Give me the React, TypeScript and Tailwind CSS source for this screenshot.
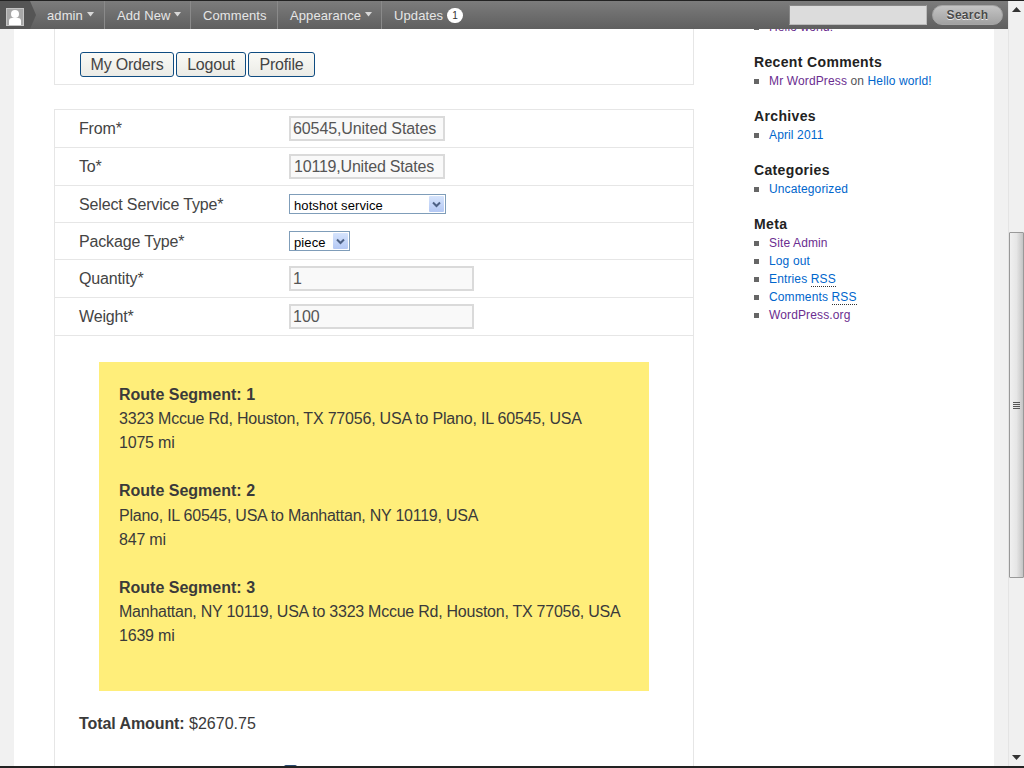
import React from "react";

const Caret = () => (
  <svg width="7" height="5" viewBox="0 0 7 5" className="ml-[4px] mb-[3px] inline-block">
    <path d="M0 0h7L3.5 4.5z" fill="#d8d8d8" />
  </svg>
);

function BarItem({ w, label, caret }: { w: string; label: string; caret?: boolean }) {
  return (
    <div className={`${w} flex h-full items-center pl-[12px] pt-[1px] border-r border-[#8a8a8a] text-[13px] tracking-[0.1px] text-[#e6e6e6]`}>
      <span>{label}</span>
      {caret && <Caret />}
    </div>
  );
}

function AdminBar() {
  return (
    <div className="relative z-10 flex h-[28px] shrink-0 items-stretch bg-gradient-to-b from-[#7c7c7c] to-[#5f5f5f]">
      <div className="flex w-[36px] items-center bg-[#555] [clip-path:polygon(0_0,30px_0,36px_50%,30px_100%,0_100%)] pl-[6px] pt-[3px]">
        <div className="relative h-[18px] w-[18px] overflow-hidden border border-[#c4c4c4] bg-[#a8a8a8]">
          <div className="absolute left-[4px] top-[1px] h-[8px] w-[8px] rounded-full bg-white" />
          <div className="absolute left-[2px] top-[9px] h-[8px] w-[12px] rounded-t-[3px] bg-white" />
        </div>
      </div>
      <BarItem w="w-[70px] ml-[-1px]" label="admin" caret />
      <BarItem w="w-[86px]" label="Add New" caret />
      <BarItem w="w-[87px]" label="Comments" />
      <BarItem w="w-[104px]" label="Appearance" caret />
      <div className="flex h-full items-center pl-[12px] pt-[1px] text-[13px] tracking-[0.1px] text-[#e6e6e6]">
        <span>Updates</span>
        <span className="ml-[4px] flex h-[15px] w-[16px] items-center justify-center rounded-full bg-white text-[10px] text-[#333]">1</span>
      </div>
      <div className="ml-auto mr-[5px] flex items-center gap-[5px] pb-[1px]">
        <div className="h-[20px] w-[138px] border border-[#888] border-b-[#bbb] border-r-[#bbb] bg-[#dcdcdc]" />
        <div className="flex h-[20px] w-[71px] items-center justify-center rounded-full border border-[#a5a5a5] bg-gradient-to-b from-[#c4c4c4] to-[#a2a2a2] text-[12px] font-bold tracking-[0.3px] text-[#4a4a4a] [text-shadow:0_1px_0_#eee]">
          Search
        </div>
      </div>
    </div>
  );
}

const btn =
  "flex h-[25px] items-center justify-center rounded-[3px] border border-[#0f4c81] bg-gradient-to-b from-[#fafaf6] to-[#ebebe6] text-[16px] tracking-[-0.2px] text-[#444]";

function Field({ label, h, nudge, children }: { label: string; h: string; nudge?: boolean; children: React.ReactNode }) {
  return (
    <div className={`${h} flex items-center border-b border-[#e6e6e6]`}>
      <div className={`${nudge ? "pt-[2px]" : ""} w-[234px] pl-[24px] text-[16px] tracking-[-0.15px] text-[#444]`}>{label}</div>
      {children}
    </div>
  );
}

function TextBox({ value, cls }: { value: string; cls: string }) {
  return (
    <input
      readOnly
      value={value}
      className={`${cls} h-[25px] border-2 border-[#dadada] bg-[#f9f9f9] text-[16px] text-[#555] outline-none`}
    />
  );
}

function SelectBox({ value, w }: { value: string; w: string }) {
  return (
    <div className={`${w} flex h-[20px] items-center justify-between border border-[#7f9db9] bg-white pl-[4px] pr-[1px] text-[13px] tracking-[0.1px] text-black`}>
      <span className="pt-[3px]">{value}</span>
      <div className="flex h-[16px] w-[15px] items-center justify-center rounded-[1px] bg-gradient-to-b from-[#d6e4fc] to-[#b4c8f4]">
        <svg width="9" height="7" viewBox="0 0 9 7">
          <path d="M1 1.5l3.5 3.5L8 1.5" fill="none" stroke="#4d6185" strokeWidth="2" />
        </svg>
      </div>
    </div>
  );
}

function Segment({ n, route, mi, track }: { n: number; route: string; mi: string; track: string }) {
  return (
    <div className="mb-[24.1px] text-[16px] leading-[24.1px] text-[#3a3a3a]">
      <div className="font-bold">Route Segment: {n}</div>
      <div className={track}>{route}</div>
      <div className="tracking-[-0.2px]">{mi}</div>
    </div>
  );
}

function Heading({ children }: { children: React.ReactNode }) {
  return <div className="mb-[1px] mt-[17px] h-[18px] text-[14px] font-bold leading-[18px] tracking-[0.35px] text-[#222]">{children}</div>;
}

function Item({ children }: { children: React.ReactNode }) {
  return (
    <div className="flex h-[18px] items-center text-[12px] leading-[18px] tracking-[0.13px] text-[#555]">
      <span className="mr-[10px] h-[5px] w-[5px] shrink-0 bg-[#666]" />
      <span>{children}</span>
    </div>
  );
}

const blue = "text-[#0066cc]";
const purple = "text-[#6b2d90]";

function Sidebar() {
  return (
    <div className="mt-[-11px] ml-[60px] w-[220px]">
      <Item><span className={purple}>Hello world!</span></Item>
      <Heading>Recent Comments</Heading>
      <Item><span className={purple}>Mr WordPress</span> on <span className={blue}>Hello world!</span></Item>
      <Heading>Archives</Heading>
      <Item><span className={blue}>April 2011</span></Item>
      <Heading>Categories</Heading>
      <Item><span className={blue}>Uncategorized</span></Item>
      <Heading>Meta</Heading>
      <Item><span className={purple}>Site Admin</span></Item>
      <Item><span className={blue}>Log out</span></Item>
      <Item><span className={blue}>Entries <span className="border-b border-dotted border-[#333]">RSS</span></span></Item>
      <Item><span className={blue}>Comments <span className="border-b border-dotted border-[#333]">RSS</span></span></Item>
      <Item><span className={purple}>WordPress.org</span></Item>
    </div>
  );
}

function Scrollbar() {
  return (
    <div className="flex w-[16px] shrink-0 flex-col items-stretch border-l border-[#e4e4e4] bg-[#f0f0f0]">
      <div className="flex h-[231px] justify-center pt-[6px]">
        <svg width="9" height="5" viewBox="0 0 9 5"><path d="M4.5 0L9 5H0z" fill="#333" /></svg>
      </div>
      <div className="flex h-[346px] w-[15px] items-center justify-center rounded-[1px] border border-[#999] bg-gradient-to-r from-[#f0f0f0] via-[#e6e6e6] to-[#c4c4c4]">
        <div className="flex w-[7px] flex-col gap-[1px]">
          <div className="h-px bg-[#555]" />
          <div className="h-px bg-[#555]" />
          <div className="h-px bg-[#555]" />
          <div className="h-px bg-[#555]" />
        </div>
      </div>
      <div className="flex flex-1 items-end justify-center pb-[6px]">
        <svg width="9" height="5" viewBox="0 0 9 5"><path d="M0 0h9L4.5 5z" fill="#333" /></svg>
      </div>
    </div>
  );
}

export default function App() {
  return (
    <div className="flex h-[768px] w-[1024px] flex-col overflow-hidden bg-[#f1f1f1] font-['Liberation_Sans',Arial,sans-serif]">
      <div className="h-px shrink-0 bg-[#222]" />
      <div className="flex min-h-0 flex-1">
        <div className="flex w-[1008px] shrink-0 flex-col">
          <AdminBar />
          <div className="ml-[14px] flex min-h-0 w-[980px] flex-1 overflow-hidden bg-white pl-[40px]">
            <div className="w-[640px] shrink-0">
              <div className="flex h-[56px] items-start gap-[2px] border-x border-b border-[#e6e6e6] pl-[25px] pt-[23px]">
                <div className={`${btn} w-[94px]`}>My Orders</div>
                <div className={`${btn} w-[70px]`}>Logout</div>
                <div className={`${btn} w-[67px]`}>Profile</div>
              </div>
              <div className="mt-[24px] border-x border-t border-[#e6e6e6]">
                <Field label="From*" h="h-[38px]"><TextBox value="60545,United States" cls="w-[156px] px-[2px] tracking-[-0.1px]" /></Field>
                <Field label="To*" h="h-[38px]"><TextBox value="10119,United States" cls="w-[156px] pl-[3px] tracking-[-0.2px]" /></Field>
                <Field label="Select Service Type*" h="h-[37px]" nudge><SelectBox value="hotshot service" w="w-[157px]" /></Field>
                <Field label="Package Type*" h="h-[37px]" nudge><SelectBox value="piece" w="w-[61px]" /></Field>
                <Field label="Quantity*" h="h-[38px]"><TextBox value="1" cls="w-[185px] px-[2px]" /></Field>
                <Field label="Weight*" h="h-[38px]"><TextBox value="100" cls="w-[185px] px-[2px]" /></Field>
                <div className="pl-[44px] pt-[26px]">
                  <div className="h-[329px] w-[550px] bg-[#ffee7a] px-[20px] pt-[21.05px]">
                    <Segment n={1} track="tracking-[-0.2px]" route="3323 Mccue Rd, Houston, TX 77056, USA to Plano, IL 60545, USA" mi="1075 mi" />
                    <Segment n={2} track="tracking-[-0.24px]" route="Plano, IL 60545, USA to Manhattan, NY 10119, USA" mi="847 mi" />
                    <Segment n={3} track="tracking-[-0.25px]" route="Manhattan, NY 10119, USA to 3323 Mccue Rd, Houston, TX 77056, USA" mi="1639 mi" />
                  </div>
                </div>
                <div className="pl-[24px] pt-[21px] text-[16px] leading-[24px] text-[#3a3a3a]">
                  <span className="font-bold tracking-[-0.08px]">Total Amount:</span> $2670.75
                </div>
                <div className="ml-[229px] mt-[29px] h-[14px] w-[13px] rounded-t-[2px] bg-[#2a4a70]" />
              </div>
            </div>
            <Sidebar />
          </div>
        </div>
        <Scrollbar />
      </div>
      <div className="h-[2px] shrink-0 bg-[#222]" />
    </div>
  );
}
